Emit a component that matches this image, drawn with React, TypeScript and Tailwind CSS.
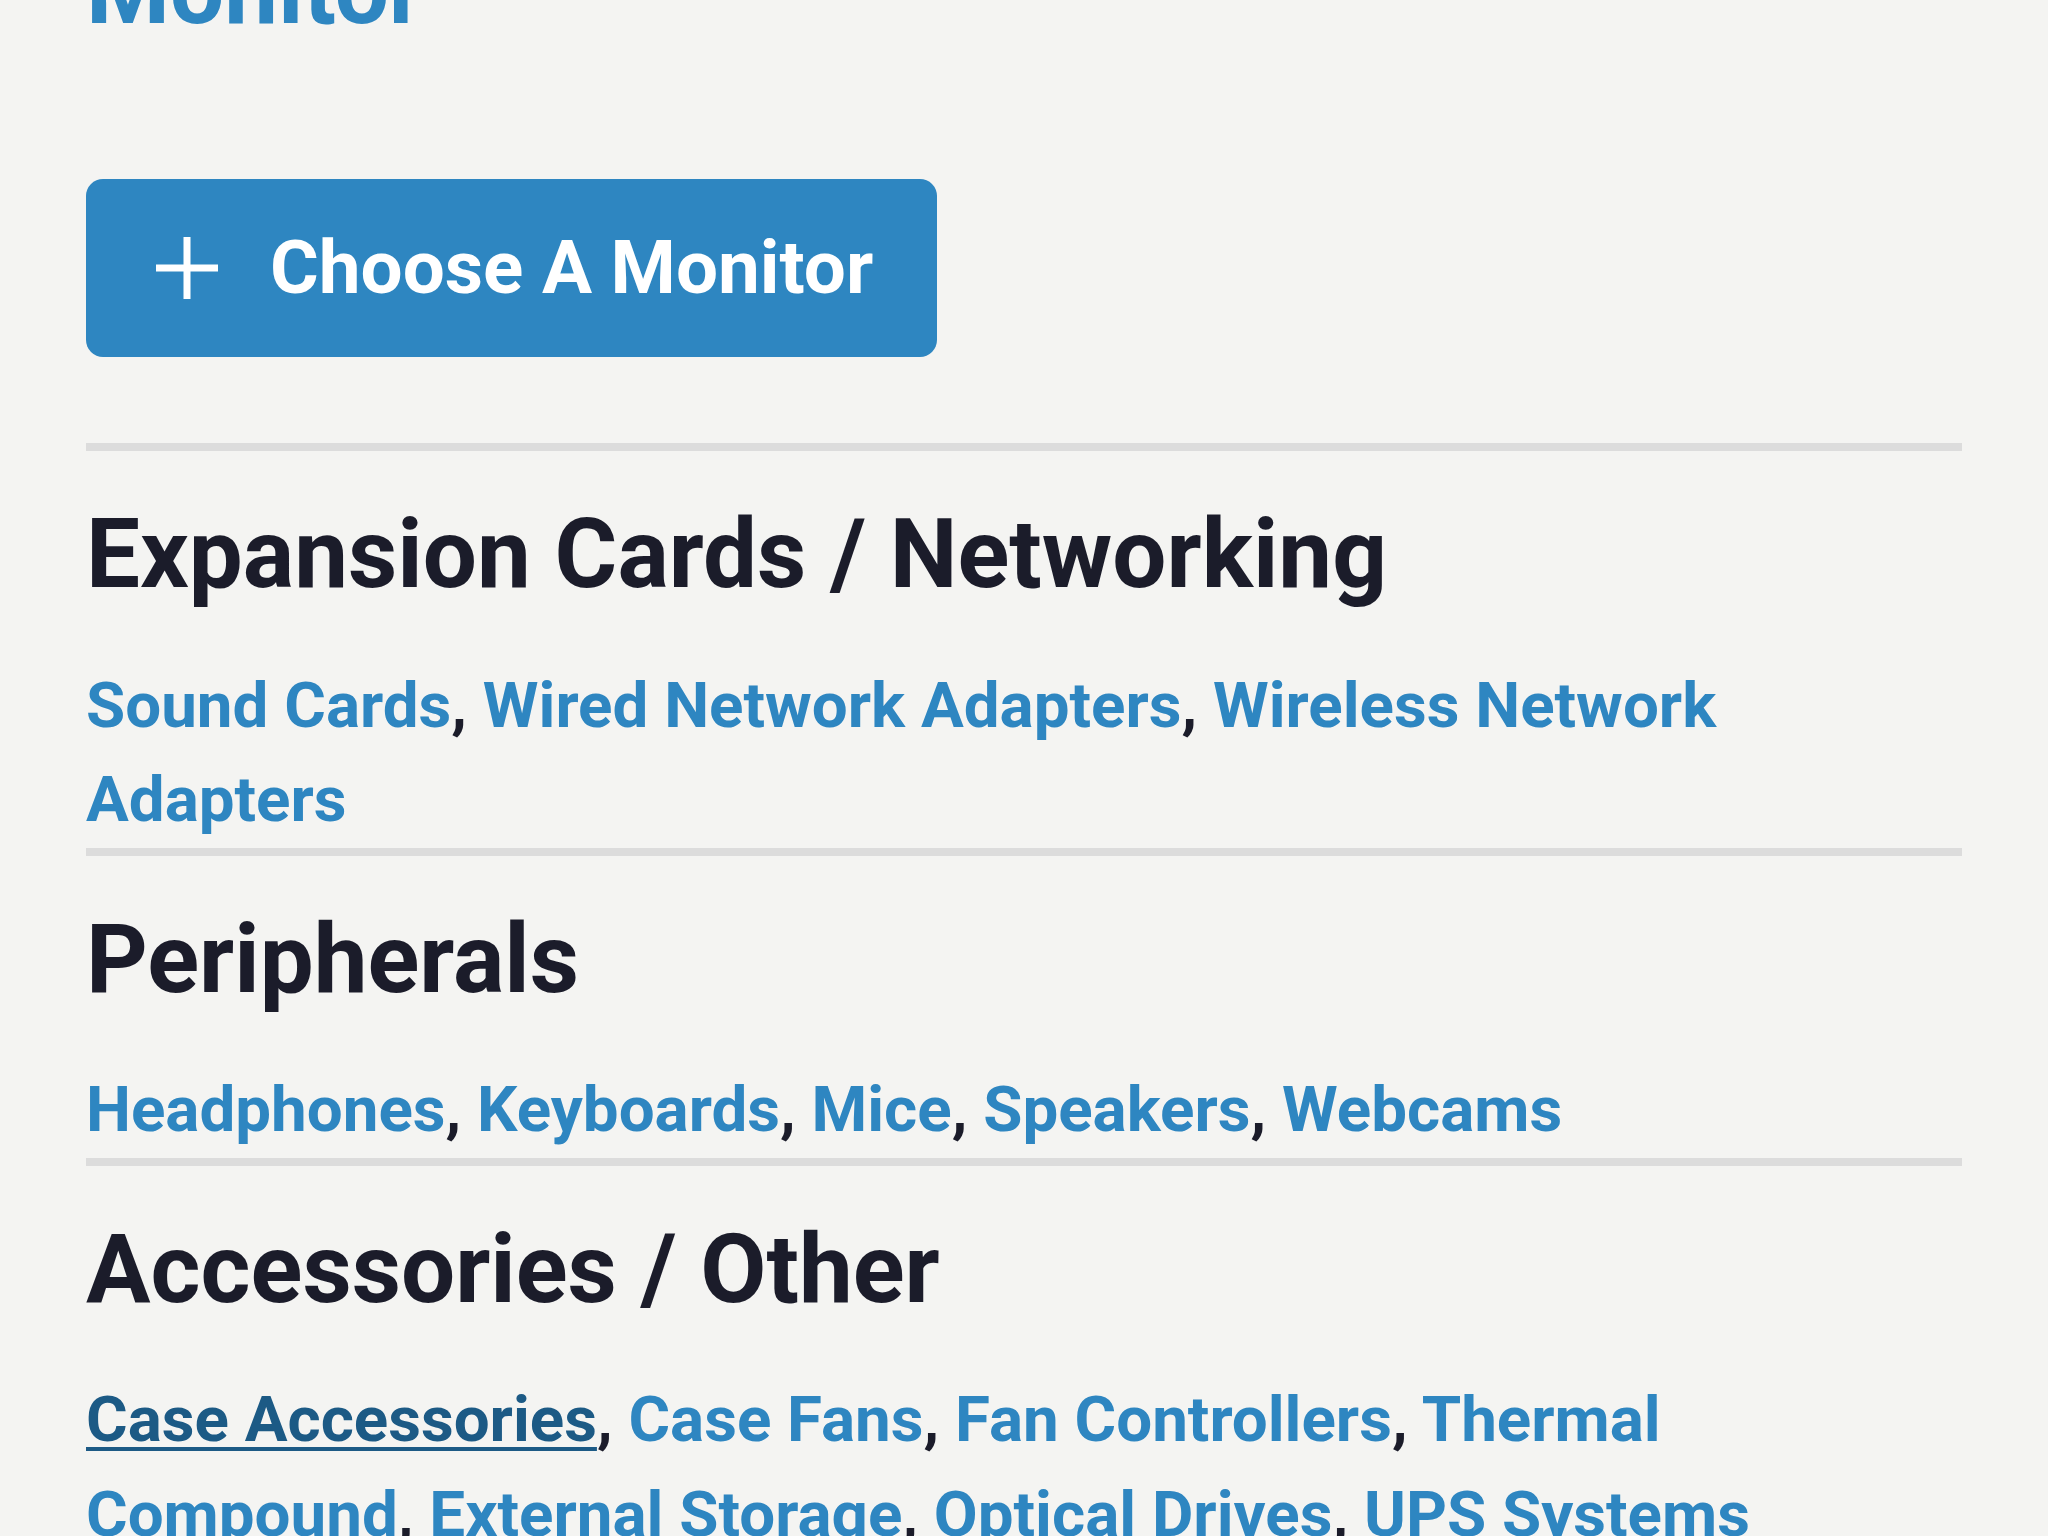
import React from "react";

type Section = {
  title: string;
  links: { label: string; active?: boolean }[];
};

const sections: Section[] = [
  {
    title: "Expansion Cards / Networking",
    links: [
      { label: "Sound Cards" },
      { label: "Wired Network Adapters" },
      { label: "Wireless Network Adapters" },
    ],
  },
  {
    title: "Peripherals",
    links: [
      { label: "Headphones" },
      { label: "Keyboards" },
      { label: "Mice" },
      { label: "Speakers" },
      { label: "Webcams" },
    ],
  },
  {
    title: "Accessories / Other",
    links: [
      { label: "Case Accessories", active: true },
      { label: "Case Fans" },
      { label: "Fan Controllers" },
      { label: "Thermal Compound" },
      { label: "External Storage" },
      { label: "Optical Drives" },
      { label: "UPS Systems" },
    ],
  },
];

const PlusIcon = () => (
  <svg width="66" height="66" viewBox="0 0 66 66" fill="none">
    <path d="M33 2v62M2 33h62" stroke="white" strokeWidth="7" />
  </svg>
);

const Divider = () => <div className="h-[8px] w-full bg-[#dcdcdc]" />;

const App = () => {
  return (
    <div
      className="min-h-screen h-[1536px] overflow-hidden bg-[#f4f4f2] px-[86px]"
      style={{ fontFamily: "Roboto, 'Noto Sans', sans-serif" }}
    >
      <h2 className="-mt-[66px] text-[96px] leading-[113.4px] font-bold text-[#2e86c1]">
        Monitor
      </h2>

      <button className="mt-[132px] flex h-[178px] items-center gap-[50px] rounded-[17px] bg-[#2e86c1] pl-[68px] pr-[64px] text-[74.6px] font-bold leading-none text-white">
        <PlusIcon />
        <span>Choose A Monitor</span>
      </button>

      <div className="mt-[86px]">
        <Divider />
      </div>

      {sections.map((section, i) => (
        <div key={section.title}>
          <h3 className="mt-[47px] mb-[47px] text-[96px] leading-[113.4px] font-bold text-[#1b1c2a]">
            {section.title}
          </h3>
          <p className="text-[63.7px] leading-[94.5px] font-bold text-[#1b1c2a]">
            {section.links.map((link, j) => (
              <React.Fragment key={link.label}>
                <a
                  href="#"
                  className={
                    link.active
                      ? "text-[#1c5a85] underline decoration-[4px] underline-offset-[6px]"
                      : "text-[#2e86c1]"
                  }
                >
                  {link.label}
                </a>
                {j < section.links.length - 1 && ", "}
              </React.Fragment>
            ))}
          </p>
          {i < sections.length - 1 && <Divider />}
        </div>
      ))}
    </div>
  );
};

export default App;
